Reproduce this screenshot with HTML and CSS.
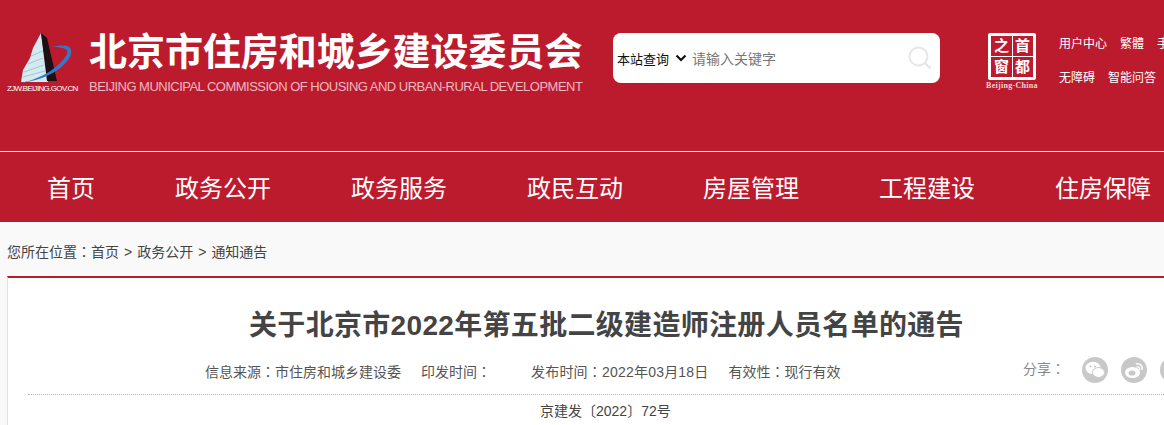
FILE: index.html
```html
<!DOCTYPE html>
<html lang="zh">
<head>
    <meta charset="UTF-8">
    <title>关于北京市2022年第五批二级建造师注册人员名单的通告</title>
    <link rel="stylesheet" href="styles.css">
</head>
<body>

    <header class="top">
        <div class="logo">
            <svg class="logo-mark" width="56" height="52" viewBox="0 0 56 52">
                <path d="M23 1 L15 16 L12 26 L5 38 L3 50 L30 50 Z" fill="#d3eaf0"/>
                <path d="M6 40 L26 33 M5 45 L27 39 M10 32 L25 26 M13 24 L25 19" stroke="#a9c6ce" stroke-width="1"/>
                <path d="M23 1 L29 6 L39 49 L29 49 Z" fill="#1b1015"/>
                <path d="M2 51 C20 48 42 36 49 22 C51 17 46 15 34 15 C46 12 55 13 53 22 C48 37 24 49 2 51 Z" fill="#3079cc"/>
            </svg>
            <div class="logo-url">ZJW.BEIJING.GOV.CN</div>
        </div>
        <div class="brand">
            <div class="brand-cn">北京市住房和城乡建设委员会</div>
            <div class="brand-en">BEIJING MUNICIPAL COMMISSION OF HOUSING AND URBAN-RURAL DEVELOPMENT</div>
        </div>
        <div class="search">
            <span class="search-scope">本站查询</span>
            <svg class="search-arrow" width="12" height="8" viewBox="0 0 12 8">
                <path d="M1.5 1.5 L6 6 L10.5 1.5" fill="none" stroke="#111" stroke-width="2.2"/>
            </svg>
            <span class="search-hint">请输入关键字</span>
            <svg class="search-icon" width="24" height="24" viewBox="0 0 24 24">
                <circle cx="10.5" cy="10.5" r="9" fill="none" stroke="#e6e6e6" stroke-width="2"/>
                <path d="M17 17 L22.5 22.5" stroke="#e6e6e6" stroke-width="2.4"/>
            </svg>
        </div>
        <div class="capital">
            <div class="capital-box">
                <span>之</span><span>首</span><span>窗</span><span>都</span>
            </div>
            <div class="capital-en">Beijing-China</div>
        </div>
        <div class="tools">
            <div class="tools-row">
                <span>用户中心</span><span>繁體</span><span>手机版</span>
            </div>
            <div class="tools-row">
                <span>无障碍</span><span>智能问答</span>
            </div>
        </div>
    </header>

    <nav class="nav">
        <a class="nav-first">首页</a>
        <a>政务公开</a>
        <a>政务服务</a>
        <a>政民互动</a>
        <a>房屋管理</a>
        <a>工程建设</a>
        <a>住房保障</a>
    </nav>

    <div class="crumb">您所在位置<span class="colon" lang="zh-Hant">：</span>首页<span class="sep">&gt;</span>政务公开<span class="sep">&gt;</span>通知通告</div>

    <main class="article">
        <h1>关于北京市2022年第五批二级建造师注册人员名单的通告</h1>
        <div class="meta">
            <div class="meta-items">
                <span class="meta-source">信息来源<span class="colon" lang="zh-Hant">：</span>市住房和城乡建设委</span>
                <span class="meta-print">印发时间<span class="colon" lang="zh-Hant">：</span></span>
                <span class="meta-date">发布时间<span class="colon" lang="zh-Hant">：</span>2022年03月18日</span>
                <span>有效性<span class="colon" lang="zh-Hant">：</span>现行有效</span>
            </div>
            <div class="share">
                <span class="share-label">分享<span class="colon" lang="zh-Hant">：</span></span>
                <span class="share-btn">
                    <svg width="20" height="18" viewBox="0 0 20 18">
                        <ellipse cx="8" cy="7" rx="7.5" ry="6.2" fill="#fff"/>
                        <ellipse cx="13.5" cy="11.5" rx="6" ry="5" fill="#fff" stroke="#c8c8c8"/>
                        <circle cx="5.5" cy="5.5" r="1" fill="#c8c8c8"/>
                        <circle cx="10" cy="5.5" r="1" fill="#c8c8c8"/>
                    </svg>
                </span>
                <span class="share-btn">
                    <svg width="20" height="18" viewBox="0 0 20 18">
                        <ellipse cx="8.5" cy="11.5" rx="7.5" ry="5.5" fill="#fff"/>
                        <ellipse cx="8" cy="12" rx="3.5" ry="2.6" fill="#c8c8c8"/>
                        <path d="M12 3 C16 2 19 5 18 9" fill="none" stroke="#fff" stroke-width="1.6"/>
                        <path d="M12.5 6 C14.5 5.5 16 7 15.5 9" fill="none" stroke="#fff" stroke-width="1.3"/>
                    </svg>
                </span>
                <span class="share-btn"></span>
            </div>
        </div>
        <div class="doc-no">京建发〔2022〕72号</div>
    </main>

</body>
</html>
```

FILE: styles.css
```css
body {
    font-family: "Liberation Sans", "Noto Sans CJK SC", sans-serif;
    background-color: #f9f9f9;
    color: #333;
    margin: 0;
    width: 1164px;
    height: 425px;
    overflow: hidden;
}

.colon {
    font-family: "Noto Sans CJK TC", sans-serif;
}

.top {
    display: flex;
    height: 151px;
    background-color: #bc1b2e;
    color: white;
}

.logo {
    width: 82px;
    flex-shrink: 0;
    padding-top: 32px;
}

.logo-mark {
    display: block;
    margin-left: 18px;
}

.logo-url {
    font-size: 8px;
    margin-left: 7px;
    white-space: nowrap;
    letter-spacing: -0.65px;
    line-height: 10px;
}

.brand {
    width: 524px;
    flex-shrink: 0;
    padding-top: 30px;
    margin-left: 7px;
}

.brand-cn {
    font-size: 38px;
    font-weight: bold;
    line-height: 44px;
    white-space: nowrap;
    letter-spacing: -0.05px;
}

.brand-en {
    font-size: 13px;
    color: #eeb9c0;
    line-height: 16px;
    margin-top: 5px;
    white-space: nowrap;
    letter-spacing: -0.51px;
}

.search {
    display: flex;
    align-items: center;
    width: 327px;
    height: 50px;
    margin-top: 33px;
    flex-shrink: 0;
    box-sizing: border-box;
    padding-left: 4px;
    background: white;
    border-radius: 8px;
    font-size: 13px;
}

.search-scope {
    color: #111;
}

.search-arrow {
    margin-left: 6px;
}

.search-hint {
    color: #777;
    font-size: 14px;
    margin-left: 5px;
}

.search-icon {
    margin-left: auto;
    margin-right: 8px;
}

.capital {
    width: 54px;
    flex-shrink: 0;
    margin: 33px 0 0 48px;
}

.capital-box {
    display: grid;
    grid-template-columns: 1fr 1fr;
    grid-template-rows: 1fr 1fr;
    width: 48px;
    height: 47px;
    box-sizing: border-box;
    border: 3px solid white;
    border-radius: 2px;
    background: linear-gradient(white, white) center / 100% 1px no-repeat,
        linear-gradient(white, white) center / 1px 100% no-repeat;
    font-size: 15px;
    font-weight: bold;
    line-height: 20px;
    text-align: center;
}

.capital-en {
    font-family: "Liberation Serif", serif;
    font-size: 8px;
    font-weight: bold;
    line-height: 10px;
    letter-spacing: 0.3px;
    color: #f3d5d9;
    white-space: nowrap;
    margin: 1px 0 0 -2px;
}

.tools {
    margin-left: 17px;
    padding-top: 36px;
    font-size: 12px;
    white-space: nowrap;
}

.tools-row {
    display: flex;
    gap: 13px;
    height: 34px;
    line-height: 16px;
}

.nav {
    display: flex;
    height: 70px;
    margin-top: 1px;
    padding-left: 47px;
    gap: 80px;
    background-color: #bc1b2e;
    white-space: nowrap;
}

.nav a {
    color: white;
    font-size: 24px;
    line-height: 73px;
    width: 96px;
    flex-shrink: 0;
}

.nav .nav-first {
    width: 48px;
}

.crumb {
    font-size: 14px;
    color: #444;
    line-height: 20px;
    padding: 19px 0 0 7px;
    height: 35px;
}

.sep {
    margin: 0 5px;
}

.article {
    margin-left: 7px;
    background: white;
    border-top: 2px solid #bc1b2e;
    border-left: 1px solid #e3e3e3;
    height: 147px;
    overflow: hidden;
}

h1 {
    font-size: 28px;
    font-weight: bold;
    color: #444;
    line-height: 40px;
    letter-spacing: 0.32px;
    margin: 0;
    padding-top: 28px;
    padding-left: 241px;
    white-space: nowrap;
}

.meta {
    display: flex;
    align-items: center;
    height: 44px;
    margin: 4px 0 0 20px;
    border-bottom: 1px dotted #b5b5b5;
    font-size: 14px;
    color: #555;
    white-space: nowrap;
}

.meta-items {
    display: flex;
    padding-left: 177px;
    padding-bottom: 2px;
    width: 995px;
    box-sizing: border-box;
    flex-shrink: 0;
}

.meta-source {
    margin-right: 20px;
}

.meta-print {
    width: 110px;
}

.meta-date {
    margin-right: 20px;
    letter-spacing: 0.2px;
}

.share {
    display: flex;
    align-items: center;
    gap: 13px;
    flex-shrink: 0;
    margin-top: -4px;
}

.share-label {
    color: #888;
    width: 46px;
    padding-bottom: 4px;
}

.share-btn {
    display: flex;
    align-items: center;
    justify-content: center;
    width: 26px;
    height: 26px;
    border-radius: 50%;
    background: #c8c8c8;
    flex-shrink: 0;
}

.doc-no {
    font-size: 14px;
    color: #444;
    line-height: 20px;
    margin-top: 6px;
    padding-left: 532px;
}
```
